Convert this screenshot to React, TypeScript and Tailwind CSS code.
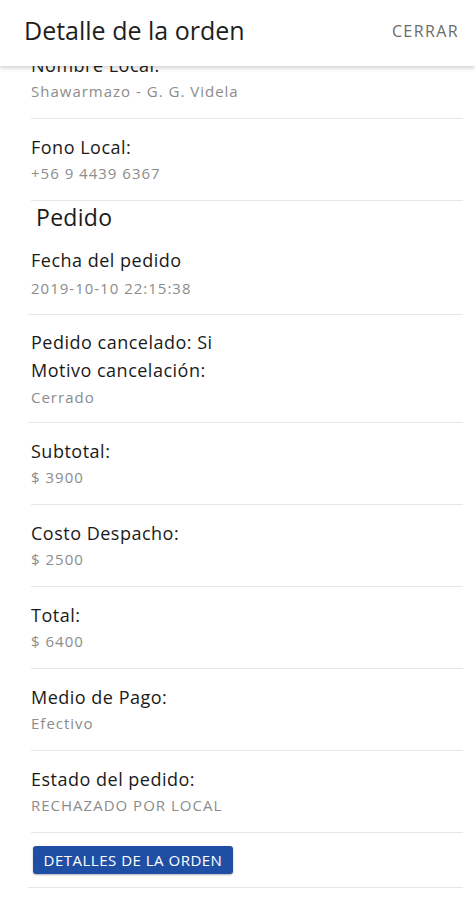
const FONT = { fontFamily: '"Open Sans", "Lato", sans-serif' };

const LABEL = "text-[18px] leading-6 tracking-[0.5px] text-[#1a1a1a]";
const VALUE = "text-[15px] leading-5 tracking-[1px] text-[#8c8c8c]";

function Item({ label, value }: { label: string; value: string }) {
  return (
    <div className="border-b border-[#e6e6e6] pt-4 pb-[17px]">
      <div className={LABEL}>{label}</div>
      <div className={`mt-1 ${VALUE}`}>{value}</div>
    </div>
  );
}

export default function App() {
  return (
    <div className="w-[475px] h-[900px] bg-white overflow-hidden" style={FONT}>
      {/* Header */}
      <div className="relative z-10 h-[66px] flex items-center justify-between pl-6 pr-4 bg-white shadow-[0_2px_4px_rgba(0,0,0,0.18)]">
        <h1 className="text-[25px] text-[#1e1e1e] -mt-1">Detalle de la orden</h1>
        <button className="text-[16px] tracking-[1.4px] text-[#6b6b6b] -mt-1">CERRAR</button>
      </div>

      {/* Body */}
      <div className="h-[834px] overflow-hidden">
        <div className="-mt-[29px] pl-7 pr-3">
          <div className="pl-[3px]">
            <Item label="Nombre Local:" value="Shawarmazo - G. G. Videla" />
            <Item label="Fono Local:" value="+56 9 4439 6367" />
          </div>

          <div className="pl-[8px] pt-[2px] text-[23px] leading-7 tracking-[0.3px] text-[#1a1a1a]">Pedido</div>

          <div className="pl-[3px] border-b border-[#e6e6e6] pt-[17px] pb-4">
            <div className={LABEL}>Fecha del pedido</div>
            <div className={`mt-[6px] ${VALUE}`}>2019-10-10 22:15:38</div>
          </div>

          <div className="pl-[3px] border-b border-[#e6e6e6] pt-[15px] pb-[15px]">
            <div className={LABEL}>Pedido cancelado: Si</div>
            <div className={`mt-1 ${LABEL}`}>Motivo cancelación:</div>
            <div className={`mt-[5px] ${VALUE}`}>Cerrado</div>
          </div>

          <div className="pl-[3px]">
            <Item label="Subtotal:" value="$ 3900" />
            <Item label="Costo Despacho:" value="$ 2500" />
            <Item label="Total:" value="$ 6400" />
            <Item label="Medio de Pago:" value="Efectivo" />
            <Item label="Estado del pedido:" value="RECHAZADO POR LOCAL" />
          </div>

          <div className="border-b border-[#e6e6e6] pt-[13px] pb-[13px] pl-[5px]">
            <button className="h-7 w-[200px] rounded-[3px] bg-[#1f4fa5] text-[15px] tracking-[0.5px] text-white shadow-[0_1px_2px_rgba(0,0,0,0.3)]">
              DETALLES DE LA ORDEN
            </button>
          </div>
        </div>
      </div>
    </div>
  );
}
